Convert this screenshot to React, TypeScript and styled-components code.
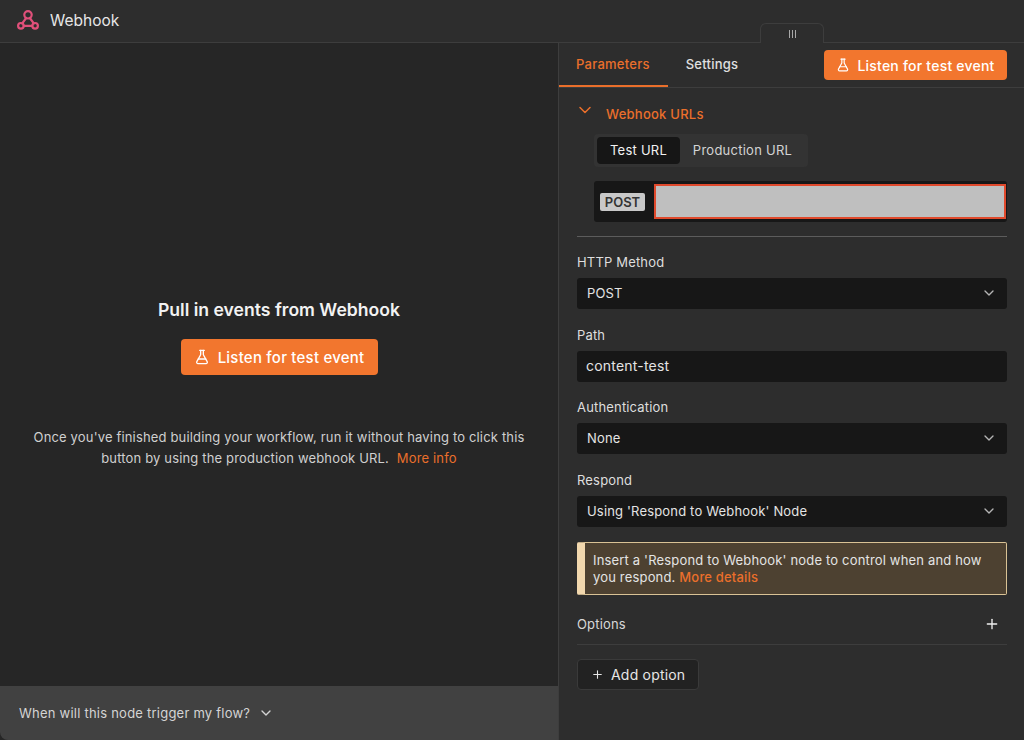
import { ChevronDown, FlaskConical, Plus } from "lucide-react";
import styled, { createGlobalStyle } from "styled-components";

const FIELDS = [
  { label: "HTTP Method", value: "POST", select: true },
  { label: "Path", value: "content-test", select: false },
  { label: "Authentication", value: "None", select: true },
  { label: "Respond", value: "Using 'Respond to Webhook' Node", select: true },
];

function WebhookLogo() {
  return (
    <svg
      width="22"
      height="20"
      viewBox="0 0 22 20"
      fill="none"
      stroke="#e0507a"
      strokeWidth="2.2"
      strokeLinecap="round"
    >
      <circle cx="11" cy="4.8" r="3.7" />
      <circle cx="3.9" cy="15.8" r="2.8" />
      <circle cx="18.1" cy="15.8" r="2.8" />
      <path d="M9.2 8 5.2 13.4M12.8 8l4 5.4M6.7 15.8h8.6" />
    </svg>
  );
}

export default function App() {
  return (
    <>
      <GlobalStyle />
      <Page>
        <Header>
          <WebhookLogo />
          <HeaderTitle>Webhook</HeaderTitle>
          <DragHandle>
            <HandleBar />
            <HandleBar />
            <HandleBar />
          </DragHandle>
        </Header>
        <Body>
          <LeftPanel>
            <LeftContent>
              <Title>Pull in events from Webhook</Title>
              <ListenButton $large>
                <FlaskConical size={16} />
                Listen for test event
              </ListenButton>
              <Description>
                Once you've finished building your workflow, run it without
                having to click this button by using the production webhook URL.{" "}
                <Link>More info</Link>
              </Description>
            </LeftContent>
            <TriggerBar>
              When will this node trigger my flow?
              <ChevronDown size={16} />
            </TriggerBar>
          </LeftPanel>
          <RightPanel>
            <TabRow>
              <Tab $active>Parameters</Tab>
              <Tab>Settings</Tab>
              <TabAction>
                <ListenButton>
                  <FlaskConical size={14} />
                  Listen for test event
                </ListenButton>
              </TabAction>
            </TabRow>
            <Form>
              <SectionTitle>
                <ChevronDown size={20} strokeWidth={1.8} />
                Webhook URLs
              </SectionTitle>
              <UrlBlock>
                <Switcher>
                  <SwitchOption $active>Test URL</SwitchOption>
                  <SwitchOption>Production URL</SwitchOption>
                </Switcher>
                <UrlRow>
                  <MethodBadge>POST</MethodBadge>
                  <RedactedUrl />
                </UrlRow>
              </UrlBlock>
              <Divider />
              {FIELDS.map((field) => (
                <Field key={field.label}>
                  <FieldLabel>{field.label}</FieldLabel>
                  <Control $input={!field.select}>
                    {field.value}
                    {field.select && <ChevronDown size={16} color="#b5b5b5" />}
                  </Control>
                </Field>
              ))}
              <Notice>
                Insert a 'Respond to Webhook' node to control when and how you
                respond. <NoticeLink>More details</NoticeLink>
              </Notice>
              <OptionsRow>
                Options
                <Plus size={16} color="#f0f0f0" />
              </OptionsRow>
              <AddOption>
                <Plus size={13} />
                Add option
              </AddOption>
            </Form>
          </RightPanel>
        </Body>
      </Page>
    </>
  );
}

const GlobalStyle = createGlobalStyle`
  html, body {
    margin: 0;
    padding: 0;
    background: #2d2d2d;
  }
  * {
    box-sizing: border-box;
  }
`;
const Page = styled.div`
  display: flex;
  flex-direction: column;
  width: 1024px;
  height: 740px;
  overflow: hidden;
  font-family: "Inter", "Liberation Sans", sans-serif;
  font-size: 13px;
  letter-spacing: 0.17px;
  color: #e4e4e4;
  background: #2d2d2d;
`;
const Header = styled.header`
  position: relative;
  display: flex;
  align-items: center;
  flex: 0 0 43px;
  gap: 11px;
  padding: 0 0 2px 17px;
  border-bottom: 1px solid #3d3d3d;
`;
const HeaderTitle = styled.span`
  font-size: 15.5px;
  letter-spacing: 0;
  color: #e6e6e6;
`;
const DragHandle = styled.div`
  position: absolute;
  left: 760px;
  top: 23px;
  display: flex;
  align-items: center;
  justify-content: center;
  gap: 2px;
  width: 64px;
  height: 20px;
  background: #2d2d2d;
  border: 1px solid #3d3d3d;
  border-bottom: none;
  border-radius: 6px 6px 0 0;
`;
const HandleBar = styled.span`
  width: 1px;
  height: 8px;
  background: #a8a8a8;
`;
const Body = styled.div`
  display: flex;
  flex: 1;
  min-height: 0;
`;
const LeftPanel = styled.section`
  display: flex;
  flex-direction: column;
  flex: 0 0 559px;
  background: #262626;
  border-right: 1px solid #3d3d3d;
`;
const LeftContent = styled.div`
  display: flex;
  flex-direction: column;
  align-items: center;
  flex: 1;
  padding-top: 255px;
`;
const Title = styled.h2`
  margin: 0 0 17px;
  font-size: 17.6px;
  line-height: 24px;
  font-weight: 600;
  letter-spacing: 0;
  color: #f2f2f2;
`;
const ListenButton = styled.button<{ $large?: boolean }>`
  display: inline-flex;
  align-items: center;
  justify-content: center;
  gap: ${(p) => (p.$large ? "8px" : "7px")};
  width: ${(p) => (p.$large ? "197px" : "183px")};
  height: ${(p) => (p.$large ? "36px" : "30px")};
  padding: 0;
  font-family: inherit;
  font-size: ${(p) => (p.$large ? "15px" : "14px")};
  font-weight: 500;
  letter-spacing: 0.22px;
  color: #fff;
  background: #f2762e;
  border: none;
  border-radius: 4px;
`;
const Description = styled.p`
  width: 510px;
  margin: 52px 0 0;
  line-height: 21px;
  letter-spacing: 0.16px;
  text-align: center;
  color: #d0d0d0;
`;
const Link = styled.span`
  margin-left: 4px;
  color: #ea6f2b;
`;
const TriggerBar = styled.div`
  display: flex;
  align-items: center;
  flex: 0 0 54px;
  gap: 8px;
  padding-left: 19px;
  letter-spacing: 0.23px;
  color: #d4d4d4;
  background: #414141;
  border-bottom-left-radius: 8px;
`;
const RightPanel = styled.section`
  display: flex;
  flex-direction: column;
  flex: 1;
`;
const TabRow = styled.div`
  display: flex;
  align-items: stretch;
  flex: 0 0 44px;
  gap: 1px;
  padding-right: 17px;
  border-bottom: 1px solid #3d3d3d;
`;
const Tab = styled.div<{ $active?: boolean }>`
  display: flex;
  align-items: center;
  height: 44px;
  padding: 0 18px 1px 17px;
  font-weight: 500;
  letter-spacing: 0.25px;
  color: ${(p) => (p.$active ? "#ea6f2b" : "#e0e0e0")};
  border-bottom: 2px solid ${(p) => (p.$active ? "#ea6f2b" : "transparent")};
`;
const TabAction = styled.div`
  display: flex;
  margin-left: auto;
  padding-top: 7px;
`;
const Form = styled.div`
  display: flex;
  flex-direction: column;
  padding: 0 17px 0 18px;
`;
const SectionTitle = styled.div`
  display: flex;
  align-items: center;
  gap: 11px;
  height: 20px;
  margin-top: 16px;
  font-weight: 500;
  letter-spacing: 0.25px;
  color: #ea6f2b;

  svg {
    flex: none;
    margin: -9px 0 0 -2px;
  }
`;
const UrlBlock = styled.div`
  display: flex;
  flex-direction: column;
  gap: 14px;
  margin: 10px 0 0 17px;
`;
const Switcher = styled.div`
  display: flex;
  align-self: flex-start;
  width: 214px;
  height: 33px;
  padding: 3px;
  background: #333333;
  border-radius: 4px;
`;
const SwitchOption = styled.div<{ $active?: boolean }>`
  display: flex;
  align-items: center;
  justify-content: center;
  width: ${(p) => (p.$active ? "83px" : "125px")};
  padding-bottom: 1px;
  letter-spacing: 0.25px;
  color: ${(p) => (p.$active ? "#f2f2f2" : "#d4d4d4")};
  background: ${(p) => (p.$active ? "#161616" : "transparent")};
  border-radius: 4px;
`;
const UrlRow = styled.div`
  display: flex;
  align-items: stretch;
  height: 41px;
  padding: 3px 1px 3px 6px;
  background: #171717;
  border-radius: 3px;
`;
const MethodBadge = styled.span`
  align-self: center;
  width: 45px;
  margin-right: 9px;
  line-height: 18px;
  font-weight: 600;
  letter-spacing: 0;
  text-align: center;
  color: #333333;
  background: #c8c8c8;
  border-radius: 2px;
`;
const RedactedUrl = styled.div`
  flex: 1;
  background: #bfbfbf;
  border: 2px solid #e0492c;
`;
const Divider = styled.hr`
  width: 100%;
  height: 1px;
  margin: 14px 0 15px;
  background: #5c5c5c;
  border: none;
`;
const Field = styled.div`
  display: flex;
  flex-direction: column;
  gap: 6px;
  margin-bottom: 15.67px;
`;
const FieldLabel = styled.label`
  line-height: 20px;
  color: #dedede;
`;
const Control = styled.div<{ $input?: boolean }>`
  display: flex;
  align-items: center;
  justify-content: space-between;
  height: 31px;
  padding: 0 10px 1px ${(p) => (p.$input ? "9px" : "10px")};
  font-size: ${(p) => (p.$input ? "14px" : "13px")};
  letter-spacing: ${(p) => (p.$input ? "0.2px" : "0.17px")};
  color: #e4e4e4;
  background: #171717;
  border-radius: 3px;
`;
const Notice = styled.div`
  height: 53px;
  margin-top: -1px;
  padding: 9px 16px 0 8px;
  line-height: 17px;
  color: #e4e4e4;
  background: #4d4131;
  border: 1px solid #d9c295;
  border-left: 8px solid #f2d8ae;
  border-radius: 2px;
`;
const NoticeLink = styled.span`
  font-weight: 500;
  color: #ea6f2b;
`;
const OptionsRow = styled.div`
  display: flex;
  align-items: center;
  justify-content: space-between;
  height: 50px;
  padding: 10px 7px 0 0;
  color: #d8d8d8;
  border-bottom: 1px solid #3d3d3d;
`;
const AddOption = styled.button`
  display: inline-flex;
  align-items: center;
  align-self: flex-start;
  gap: 7px;
  width: 122px;
  height: 31px;
  margin-top: 14px;
  padding: 0 0 0 13px;
  font-family: inherit;
  font-size: 14px;
  letter-spacing: 0.2px;
  color: #e6e6e6;
  background: #222222;
  border: 1px solid #3a3a3a;
  border-radius: 4px;
`;
